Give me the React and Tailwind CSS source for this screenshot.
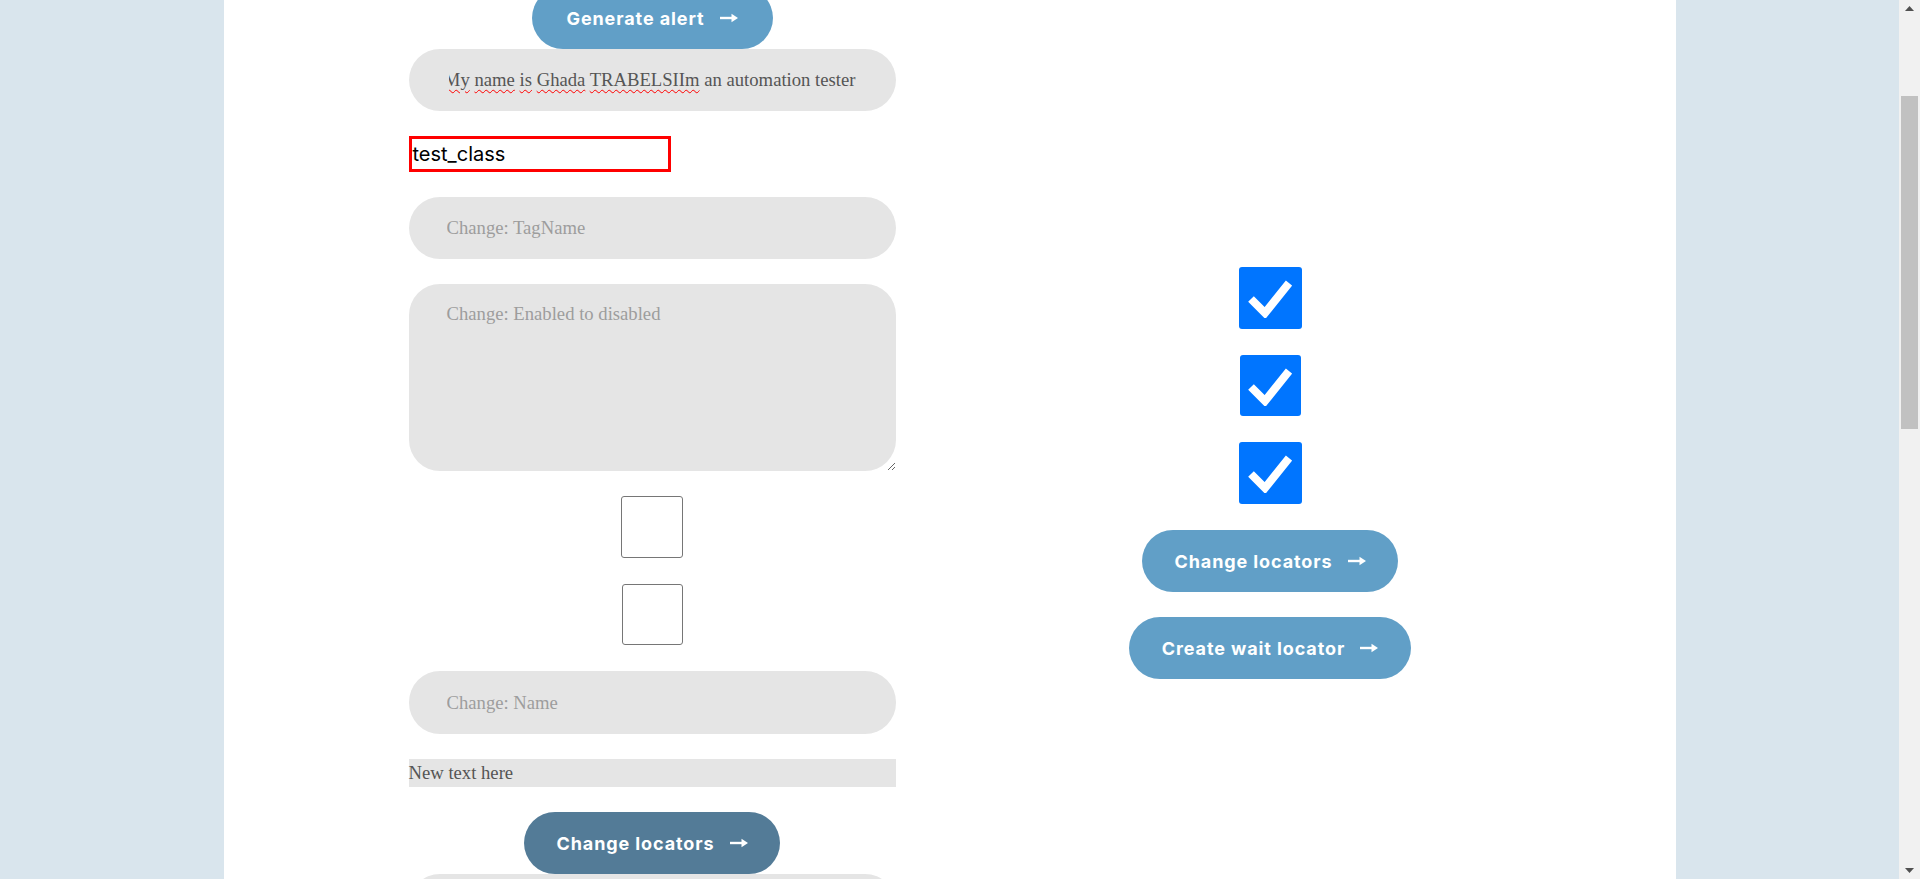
import React from 'react';

const serif = { fontFamily: '"Liberation Serif", "Times New Roman", serif' };
const sans = { fontFamily: 'Inter, "Open Sans", sans-serif' };

const Arrow = () => (
  <svg width="18" height="10" viewBox="0 0 18 10" className="shrink-0">
    <rect x="0" y="3.8" width="13" height="2.4" fill="white" />
    <path d="M11.5 0.8 L18 5 L11.5 9.2 Z" fill="white" />
  </svg>
);

const PillButton = ({ label, width, dark }) => (
  <button
    style={sans}
    className={`flex h-[62px] shrink-0 items-center justify-center gap-[15px] rounded-full text-[18px] font-bold tracking-[0.9px] text-white ${width} ${
      dark ? 'bg-[#537b97]' : 'bg-[#619fc7]'
    }`}
  >
    <span>{label}</span>
    <Arrow />
  </button>
);

const Checked = ({ size }) => (
  <div className={`flex items-center justify-center rounded-[3px] bg-[#0075ff] ${size}`}>
    <svg width="44" height="40" viewBox="0 0 44 40">
      <path d="M3 21 L17 35 L41 5" fill="none" stroke="white" strokeWidth="8" />
    </svg>
  </div>
);

const Unchecked = ({ size }) => (
  <div className={`rounded-[3px] border border-[#767676] bg-white ${size}`} />
);

const Spell = ({ children }) => (
  <span className="underline decoration-[#ff0000] decoration-wavy decoration-1 underline-offset-[3px]">
    {children}
  </span>
);

const inputCls =
  'h-[62px] w-full rounded-[31px] bg-[#e5e5e5] pl-[38px] pr-[40px] text-[18.67px] text-[#555] outline-none placeholder:text-[#9d9d9d]';

export default function App() {
  return (
    <div className="flex h-[879px] w-full overflow-hidden bg-[#d9e5ed]">
      <div className="flex flex-1 justify-center">
        <div className="flex h-full w-[1452px] items-start bg-white pl-[185px]">
          {/* left column */}
          <div className="-mt-[13px] flex w-[487px] flex-col items-center">
            <PillButton label="Generate alert" width="w-[241px]" />

            <div
              style={serif}
              className="flex h-[62px] w-full items-center rounded-[31px] bg-[#e5e5e5] px-[40px] text-[18.67px] text-[#555]"
            >
              <div className="flex flex-1 justify-end overflow-hidden">
                <span className="whitespace-nowrap">
                  <Spell>My</Spell> <Spell>name</Spell> <Spell>is</Spell> <Spell>Ghada</Spell>{' '}
                  <Spell>TRABELSIIm</Spell> an automation tester
                </span>
              </div>
            </div>

            <div className="mt-[25px] flex h-[36px] w-[262px] items-center self-start border-[3px] border-[#ff0000] pl-px">
              <span style={sans} className="text-[20px] text-black">
                test_class
              </span>
            </div>

            <input style={serif} className={`mt-[25px] ${inputCls}`} placeholder="Change: TagName" />

            <textarea
              style={serif}
              className="mt-[25px] h-[187px] w-full rounded-[31px] bg-[#e5e5e5] px-[38px] pt-[16px] text-[18.67px] text-[#555] outline-none placeholder:text-[#9d9d9d]"
              placeholder="Change: Enabled to disabled"
            />

            <div className="mt-[25px]">
              <Unchecked size="h-[62px] w-[62px]" />
            </div>
            <div className="mt-[26px]">
              <Unchecked size="h-[61px] w-[61px]" />
            </div>

            <input style={serif} className={`mt-[26px] h-[63px] ${inputCls}`} placeholder="Change: Name" />

            <div
              style={serif}
              className="mt-[25px] flex h-[28px] w-full items-center bg-[#e5e5e5] text-[18.67px] text-[#555]"
            >
              New text here
            </div>

            <div className="mt-[25px]">
              <PillButton label="Change locators" width="w-[256px]" dark />
            </div>

            <input style={serif} className={inputCls} placeholder="" />
          </div>

          {/* right column */}
          <div className="ml-[131px] flex w-[487px] flex-col items-center pt-[267px]">
            <Checked size="h-[62px] w-[63px]" />
            <div className="mt-[26px]">
              <Checked size="h-[61px] w-[61px]" />
            </div>
            <div className="mt-[26px]">
              <Checked size="h-[62px] w-[63px]" />
            </div>
            <div className="mt-[26px]">
              <PillButton label="Change locators" width="w-[256px]" />
            </div>
            <div className="mt-[25px]">
              <PillButton label="Create wait locator" width="w-[282px]" />
            </div>
          </div>
        </div>
      </div>

      {/* scrollbar */}
      <div className="flex h-full w-[21px] shrink-0 flex-col items-center bg-[#f1f1f1]">
        <div className="flex h-[17px] w-full items-center justify-center">
          <svg width="9" height="5" viewBox="0 0 9 5">
            <path d="M4.5 0 L9 5 L0 5 Z" fill="#505050" />
          </svg>
        </div>
        <div className="mt-[79px] h-[333px] w-[17px] bg-[#c1c1c1]" />
        <div className="flex-1" />
        <div className="flex h-[17px] w-full items-center justify-center">
          <svg width="9" height="5" viewBox="0 0 9 5">
            <path d="M0 0 L9 0 L4.5 5 Z" fill="#505050" />
          </svg>
        </div>
      </div>
    </div>
  );
}
